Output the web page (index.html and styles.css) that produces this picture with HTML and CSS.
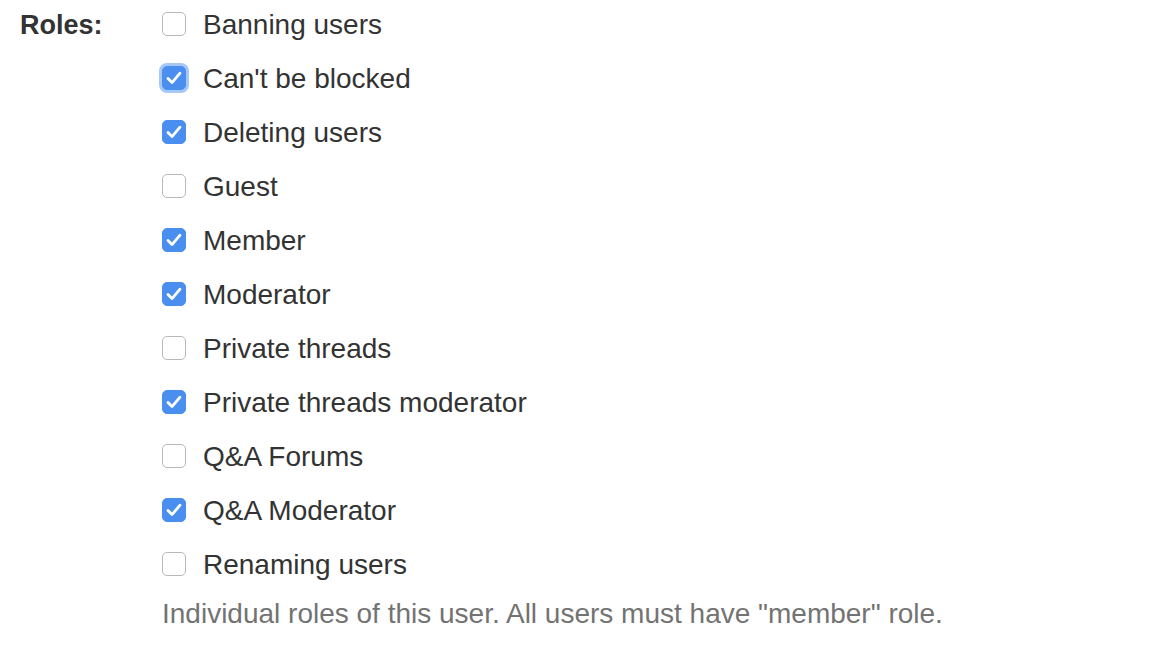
FILE: index.html
```html
<!DOCTYPE html>
<html>
<head>
<meta charset="utf-8">
<link rel="stylesheet" href="styles.css">
</head>
<body>
<div class="form-group">
  <div class="control-label">Roles:</div>
  <div class="controls">
    <label class="check-row"><span class="box"></span><span class="text">Banning users</span></label>
    <label class="check-row"><span class="box checked focused"><svg viewBox="0 0 24 24"><path d="M6 12.6 L10 16.6 L18 7.2"/></svg></span><span class="text">Can't be blocked</span></label>
    <label class="check-row"><span class="box checked"><svg viewBox="0 0 24 24"><path d="M6 12.6 L10 16.6 L18 7.2"/></svg></span><span class="text">Deleting users</span></label>
    <label class="check-row"><span class="box"></span><span class="text">Guest</span></label>
    <label class="check-row"><span class="box checked"><svg viewBox="0 0 24 24"><path d="M6 12.6 L10 16.6 L18 7.2"/></svg></span><span class="text">Member</span></label>
    <label class="check-row"><span class="box checked"><svg viewBox="0 0 24 24"><path d="M6 12.6 L10 16.6 L18 7.2"/></svg></span><span class="text">Moderator</span></label>
    <label class="check-row"><span class="box"></span><span class="text">Private threads</span></label>
    <label class="check-row"><span class="box checked"><svg viewBox="0 0 24 24"><path d="M6 12.6 L10 16.6 L18 7.2"/></svg></span><span class="text">Private threads moderator</span></label>
    <label class="check-row"><span class="box"></span><span class="text">Q&amp;A Forums</span></label>
    <label class="check-row"><span class="box checked"><svg viewBox="0 0 24 24"><path d="M6 12.6 L10 16.6 L18 7.2"/></svg></span><span class="text">Q&amp;A Moderator</span></label>
    <label class="check-row"><span class="box"></span><span class="text">Renaming users</span></label>
    <p class="help-block">Individual roles of this user. All users must have "member" role.</p>
  </div>
</div>
</body>
</html>
```
FILE: styles.css
```css
html, body {
  margin: 0;
  padding: 0;
  background: #ffffff;
}
body {
  font-family: "Liberation Sans", Arial, Helvetica, sans-serif;
  font-size: 28px;
  color: #333333;
}
.form-group {
  display: flex;
  padding-left: 20px;
}
.control-label {
  width: 142px;
  font-weight: bold;
  font-size: 27px;
  height: 54px;
  line-height: 50px;
}
.controls {
  display: flex;
  flex-direction: column;
}
.check-row {
  display: flex;
  align-items: center;
  height: 54px;
  gap: 17px;
}
.check-row .text {
  line-height: 30px;
  position: relative;
  top: -2px;
}
.box {
  width: 24px;
  height: 24px;
  box-sizing: border-box;
  border: 1px solid #b9b9b9;
  border-radius: 5px;
  background: #ffffff;
  display: flex;
  align-items: center;
  justify-content: center;
  position: relative;
  top: -3px;
}
.box.checked {
  background: #4a8ff0;
  border-color: #4a8ff0;
}
.box.focused {
  box-shadow: 0 0 0 3px #a6c8f7;
}
.box svg {
  width: 24px;
  height: 24px;
  flex: none;
  fill: none;
  stroke: #ffffff;
  stroke-width: 2.8;
  stroke-linecap: round;
  stroke-linejoin: round;
}
.help-block {
  margin: 0;
  color: #737373;
  line-height: 42px;
  margin-top: -1px;
}
```
